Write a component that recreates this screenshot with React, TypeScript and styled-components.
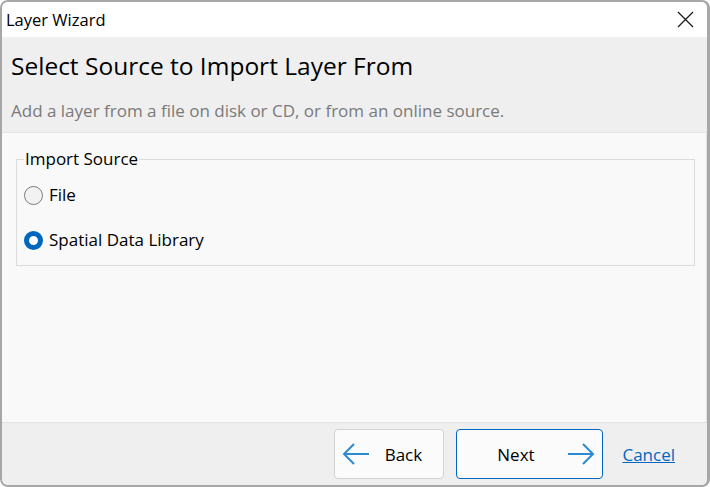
import React, { useState } from 'react';
import styled, { createGlobalStyle } from 'styled-components';

const GlobalStyle = createGlobalStyle`
  html, body {
    margin: 0;
    padding: 0;
    background: #ffffff;
  }
  * {
    box-sizing: border-box;
  }
`;

const Window = styled.div`
  width: 710px;
  height: 487px;
  display: flex;
  flex-direction: column;
  border: 2px solid #a7a7a7;
  border-right-width: 3px;
  border-radius: 8px;
  overflow: hidden;
  background: #efefef;
  font-family: 'Open Sans', 'Noto Sans', sans-serif;
  color: #000;
`;

const TitleBar = styled.div`
  height: 35px;
  flex: none;
  display: flex;
  align-items: center;
  justify-content: space-between;
  background: #ffffff;
  padding: 0 12px 0 4px;
  font-size: 16.5px;
`;

const CloseButton = styled.button`
  border: none;
  background: transparent;
  padding: 0;
  width: 20px;
  height: 20px;
  display: flex;
  align-items: center;
  justify-content: center;
  cursor: pointer;
`;

const Header = styled.div`
  height: 95px;
  flex: none;
  padding: 12px 9px 0;
  background: #efefef;
`;

const Heading = styled.h1`
  margin: 0;
  font-size: 24.5px;
  font-weight: 400;
  line-height: 34px;
`;

const Subtitle = styled.p`
  margin: 17px 0 0;
  font-size: 17px;
  line-height: 22px;
  color: #7a7a7a;
`;

const Content = styled.div`
  flex: 1;
  background: #f9f9f9;
  border-top: 1px solid #e6e6e6;
  border-bottom: 1px solid #e2e2e2;
  border-right: 1px solid #e2e2e2;
  padding: 15px 11px 0 14px;
`;

const GroupBox = styled.fieldset`
  margin: 0;
  height: 118px;
  border: 1px solid #dcdcdc;
  padding: 13px 7px 0;
  display: flex;
  flex-direction: column;
  gap: 21px;
`;

const Legend = styled.legend`
  padding: 0 1px;
  margin-left: 0;
  font-size: 17px;
  line-height: 22px;
`;

const Option = styled.label`
  display: flex;
  align-items: center;
  gap: 6px;
  font-size: 17px;
  line-height: 24px;
  cursor: pointer;
`;

const RadioMark = styled.span<{ $checked: boolean }>`
  width: 19px;
  height: 19px;
  border-radius: 50%;
  flex: none;
  border: ${p => (p.$checked ? '5.5px solid #0067c0' : '1px solid #7d7d7d')};
  background: ${p => (p.$checked ? '#ffffff' : '#f2f2f2')};
`;

const Footer = styled.div`
  height: 62px;
  flex: none;
  display: flex;
  align-items: center;
  justify-content: flex-end;
  padding: 0 32px 0 0;
  background: #efefef;
`;

const NavButton = styled.button<{ $primary?: boolean; $width: number }>`
  width: ${p => p.$width}px;
  height: 50px;
  margin-left: 12px;
  display: flex;
  align-items: center;
  justify-content: space-between;
  padding: 0 7px;
  background: #fbfbfb;
  border: 1px solid ${p => (p.$primary ? '#0067c0' : '#d3d3d3')};
  border-radius: 4px;
  font-family: inherit;
  font-size: 17px;
  color: #000;
  cursor: pointer;
`;

const ButtonLabel = styled.span`
  flex: 1;
  text-align: center;
`;

const CancelLink = styled.a`
  margin-left: 19px;
  font-size: 17px;
  color: #0067c0;
  text-decoration: underline;
  cursor: pointer;
`;

const Arrow = ({ dir }: { dir: 'left' | 'right' }) => (
  <svg width="28" height="24" viewBox="0 0 28 24" fill="none" stroke="#2b8ad2" strokeWidth="2">
    {dir === 'left' ? (
      <path d="M27 12H2M12 2L2 12l10 10" />
    ) : (
      <path d="M1 12h25M16 2l10 10-10 10" />
    )}
  </svg>
);

export default function App() {
  const [source, setSource] = useState<'file' | 'library'>('library');

  return (
    <>
      <GlobalStyle />
      <Window>
        <TitleBar>
          <span>Layer Wizard</span>
          <CloseButton aria-label="Close">
            <svg width="17" height="17" viewBox="0 0 17 17" stroke="#1a1a1a" strokeWidth="1.3">
              <path d="M1 1l15 15M16 1L1 16" />
            </svg>
          </CloseButton>
        </TitleBar>
        <Header>
          <Heading>Select Source to Import Layer From</Heading>
          <Subtitle>Add a layer from a file on disk or CD, or from an online source.</Subtitle>
        </Header>
        <Content>
          <GroupBox>
            <Legend>Import Source</Legend>
            <Option onClick={() => setSource('file')}>
              <RadioMark $checked={source === 'file'} />
              File
            </Option>
            <Option onClick={() => setSource('library')}>
              <RadioMark $checked={source === 'library'} />
              Spatial Data Library
            </Option>
          </GroupBox>
        </Content>
        <Footer>
          <NavButton $width={110}>
            <Arrow dir="left" />
            <ButtonLabel>Back</ButtonLabel>
          </NavButton>
          <NavButton $width={147} $primary>
            <ButtonLabel>Next</ButtonLabel>
            <Arrow dir="right" />
          </NavButton>
          <CancelLink>Cancel</CancelLink>
        </Footer>
      </Window>
    </>
  );
}
